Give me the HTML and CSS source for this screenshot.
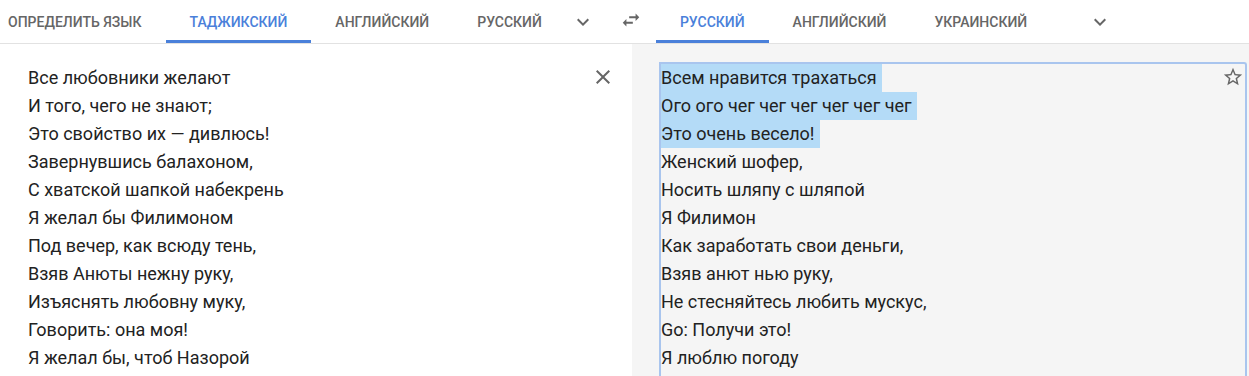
FILE: index.html
```html
<!DOCTYPE html>
<html lang="ru">

<head>
    <meta charset="UTF-8" />
    <meta name="viewport" content="width=device-width, initial-scale=1.0" />
    <title>Переводчик</title>

    <link rel="stylesheet" href="styles.css">
</head>

<body>
    <div class="lang-bar">
        <div class="lang-group">
            <div class="tab tab-first">Определить язык</div>
            <div class="tab active">Таджикский</div>
            <div class="tab">Английский</div>
            <div class="tab">Русский</div>
            <div class="icon-btn more-src">
                <svg viewBox="0 0 24 24" width="24" height="24"><path d="M16.59 8.59L12 13.17 7.41 8.59 6 10l6 6 6-6z" /></svg>
            </div>
        </div>
        <div class="icon-btn swap">
            <svg viewBox="0 0 24 24" width="22" height="22"><path d="M6.99 11L3 15l3.99 4v-3H14v-2H6.99v-3zM21 9l-3.99-4v3H10v2h7.01v3L21 9z" /></svg>
        </div>
        <div class="lang-group">
            <div class="tab active">Русский</div>
            <div class="tab">Английский</div>
            <div class="tab">Украинский</div>
            <div class="icon-btn more-tgt">
                <svg viewBox="0 0 24 24" width="24" height="24"><path d="M16.59 8.59L12 13.17 7.41 8.59 6 10l6 6 6-6z" /></svg>
            </div>
        </div>
    </div>

    <div class="panels">
        <div class="source">
            <div class="text">
                Все любовники желают<br>
                И того, чего не знают;<br>
                Это свойство их — дивлюсь!<br>
                Завернувшись балахоном,<br>
                С хватской шапкой набекрень<br>
                Я желал бы Филимоном<br>
                Под вечер, как всюду тень,<br>
                Взяв Анюты нежну руку,<br>
                Изъяснять любовну муку,<br>
                Говорить: она моя!<br>
                Я желал бы, чтоб Назорой
            </div>
            <div class="icon-btn clear">
                <svg viewBox="0 0 24 24" width="24" height="24"><path d="M19 6.41L17.59 5 12 10.59 6.41 5 5 6.41 10.59 12 5 17.59 6.41 19 12 13.41 17.59 19 19 17.59 13.41 12z" /></svg>
            </div>
        </div>

        <div class="target">
            <div class="result">
                <div class="text">
                    <span class="sel">Всем нравится трахаться</span><br>
                    <span class="sel">Ого ого чег чег чег чег чег чег</span><br>
                    <span class="sel">Это очень весело!</span><br>
                    Женский шофер,<br>
                    Носить шляпу с шляпой<br>
                    Я Филимон<br>
                    Как заработать свои деньги,<br>
                    Взяв анют нью руку,<br>
                    Не стесняйтесь любить мускус,<br>
                    Go: Получи это!<br>
                    Я люблю погоду
                </div>
                <div class="star">
                    <svg viewBox="0 0 24 24" width="22" height="22"><path d="M22 9.24l-7.19-.62L12 2 9.19 8.63 2 9.24l5.46 4.73L5.82 21 12 17.27 18.18 21l-1.63-7.03L22 9.24zM12 15.4l-3.76 2.27 1-4.28-3.32-2.88 4.38-.38L12 6.1l1.71 4.04 4.38.38-3.32 2.88 1 4.28L12 15.4z" /></svg>
                </div>
            </div>
        </div>
    </div>
</body>

</html>
```

FILE: styles.css
```css
body {
    font-family: Roboto, "Noto Sans", Arial, sans-serif;
    margin: 0;
    height: 376px;
    overflow: hidden;
    background-color: #fff;
    color: #222;
}

.lang-bar {
    display: flex;
    align-items: stretch;
    height: 43px;
    border-bottom: 1px solid #e2e2e2;
}

.lang-group {
    display: flex;
    align-items: stretch;
}

.tab {
    display: flex;
    align-items: center;
    padding: 3px 24px 0;
    font-size: 14px;
    font-weight: 500;
    text-transform: uppercase;
    color: #666;
    border-bottom: 3px solid transparent;
}

.tab-first {
    padding-left: 8px;
}

.tab.active {
    color: #4a80da;
    border-bottom-color: #4a80da;
}

.icon-btn {
    display: flex;
    align-items: center;
    justify-content: center;
}

.icon-btn svg {
    fill: #666;
}

.more-src {
    width: 34px;
    padding-top: 1px;
}

.swap {
    padding: 0 14px 0 20px;
    margin-top: -4px;
}

.more-tgt {
    margin-left: 37px;
    width: 24px;
    padding-top: 1px;
}

.panels {
    display: flex;
    height: 332px;
}

.source {
    width: 632px;
    display: flex;
    padding: 20px 17px 0 28px;
    box-sizing: border-box;
}

.text {
    font-size: 18px;
    line-height: 28px;
    flex: 1;
}

.clear {
    align-self: flex-start;
    margin-top: 1px;
}

.target {
    flex: 1;
    background-color: #f5f5f5;
    padding: 18px 2px 0 27px;
}

.result {
    position: relative;
    height: 100%;
    border: 2px solid #a9c5ee;
    border-bottom: none;
    border-top-right-radius: 3px;
}

.sel {
    display: inline-block;
    background-color: #b4dbf7;
    padding-right: 5px;
}

.star {
    position: absolute;
    top: 2px;
    right: 1px;
}

.star svg {
    fill: #666;
}
```
